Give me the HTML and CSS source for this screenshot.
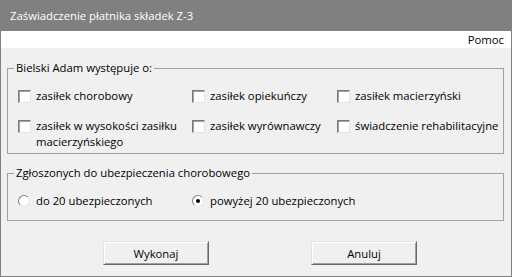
FILE: index.html
```html
<!DOCTYPE html>
<html lang="pl">
<head>
<meta charset="utf-8">
<title>Zaświadczenie płatnika składek Z-3</title>
<link rel="stylesheet" href="styles.css">
</head>
<body>
<div class="window">
  <div class="titlebar">Zaświadczenie płatnika składek Z-3</div>
  <div class="menubar"><span class="menu-item">Pomoc</span></div>
  <div class="content">
    <fieldset class="group group-benefits">
      <legend>Bielski Adam występuje o:</legend>
      <div class="grid">
        <label class="check"><span class="box"></span><span class="label">zasiłek chorobowy</span></label>
        <label class="check"><span class="box"></span><span class="label">zasiłek opiekuńczy</span></label>
        <label class="check"><span class="box"></span><span class="label">zasiłek macierzyński</span></label>
        <label class="check"><span class="box"></span><span class="label wrap">zasiłek w wysokości zasiłku macierzyńskiego</span></label>
        <label class="check"><span class="box"></span><span class="label">zasiłek wyrównawczy</span></label>
        <label class="check"><span class="box"></span><span class="label">świadczenie rehabilitacyjne</span></label>
      </div>
    </fieldset>
    <fieldset class="group group-insured">
      <legend>Zgłoszonych do ubezpieczenia chorobowego</legend>
      <div class="grid radios">
        <label class="radio"><span class="dot"></span><span class="label">do 20 ubezpieczonych</span></label>
        <label class="radio checked"><span class="dot"></span><span class="label">powyżej 20 ubezpieczonych</span></label>
      </div>
    </fieldset>
    <div class="buttons">
      <button class="btn" type="button">Wykonaj</button>
      <button class="btn" type="button">Anuluj</button>
    </div>
  </div>
</div>
</body>
</html>
```
FILE: styles.css
```css
html, body {
  margin: 0;
  padding: 0;
}
body {
  font-family: "Open Sans", "Noto Sans", sans-serif;
  font-size: 11.3px;
  color: #000;
  background: #f0f0f0;
}
.window {
  width: 512px;
  height: 277px;
  box-sizing: border-box;
  border: 1px solid #808080;
  border-top: none;
  background: #f0f0f0;
  display: flex;
  flex-direction: column;
}
.titlebar {
  height: 31px;
  margin: 0 -1px;
  background: #808080;
  color: #fff;
  font-size: 11.3px;
  line-height: 31px;
  padding-left: 10px;
}
.menubar {
  height: 17px;
  background: #fff;
  text-align: right;
  line-height: 17px;
  padding-right: 7px;
}
.content {
  padding: 12px 7px 0 6px;
}
.group {
  margin: 0;
  border: 1px solid #a0a0a0;
  padding: 12px 0 3px 10px;
  min-width: 0;
}
.group legend {
  padding: 0 2px;
  margin-left: -4px;
  line-height: 16px;
}
.grid {
  display: grid;
  grid-template-columns: 174px 145px 1fr;
  row-gap: 14px;
  line-height: 16px;
}
.check, .radio {
  display: flex;
  align-items: flex-start;
  gap: 5px;
}
.label {
  white-space: nowrap;
}
.box {
  flex: none;
  width: 13px;
  height: 13px;
  box-sizing: border-box;
  margin-top: 2px;
  background: #fff;
  border: 1px solid;
  border-color: #7a7a7a #e3e3e3 #e3e3e3 #7a7a7a;
  box-shadow: inset 1px 1px 0 #a0a0a0;
}
.label.wrap {
  white-space: normal;
  max-width: 150px;
}
.group-insured {
  margin-top: 11px;
  padding-bottom: 11px;
}
.radios {
  grid-template-columns: 174px 1fr;
}
.radio {
  gap: 6px;
}
.dot {
  flex: none;
  width: 12px;
  height: 12px;
  box-sizing: border-box;
  margin-top: 2px;
  border-radius: 50%;
  background: #fff;
  border: 1px solid;
  border-color: #808080 #e3e3e3 #e3e3e3 #808080;
  display: flex;
  align-items: center;
  justify-content: center;
}
.radio.checked .dot::after {
  content: "";
  width: 4px;
  height: 4px;
  border-radius: 50%;
  background: #000;
}
.buttons {
  display: flex;
  gap: 102px;
  padding-left: 96px;
  margin-top: 20px;
}
.btn {
  width: 106px;
  height: 24px;
  font: inherit;
  color: #000;
  background: #f0f0f0;
  border: 1px solid;
  border-color: #e3e3e3 #696969 #696969 #e3e3e3;
  box-shadow: inset 1px 1px 0 #fff, inset -1px -1px 0 #a0a0a0;
  padding: 0;
}
```
